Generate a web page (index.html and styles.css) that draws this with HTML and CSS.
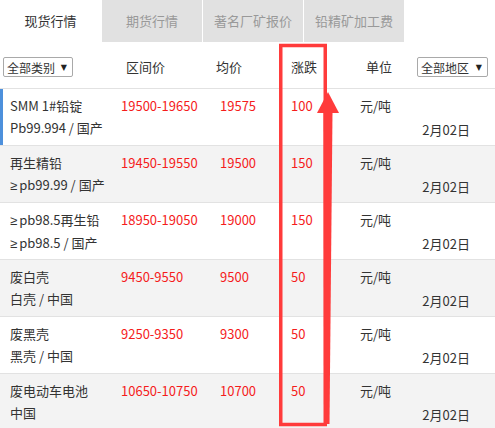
FILE: index.html
```html
<!DOCTYPE html>
<html>
<head>
    <title>铅价行情</title>
    <meta charset="UTF-8">
    <link rel="stylesheet" href="styles.css">
</head>
<body>
<div class="panel">
    <ul class="tabs">
        <li class="tab active">现货行情</li>
        <li class="tab">期货行情</li>
        <li class="tab">著名厂矿报价</li>
        <li class="tab">铅精矿加工费</li>
    </ul>

    <div class="table">
        <div class="row head">
            <div class="cell c-name"><span class="pick">全部类别<i class="tri">▼</i></span></div>
            <div class="cell c-range">区间价</div>
            <div class="cell c-avg">均价</div>
            <div class="cell c-chg">涨跌</div>
            <div class="cell c-unit">单位</div>
            <div class="cell c-date"><span class="pick">全部地区<i class="tri">▼</i></span></div>
        </div>

        <div class="row item selected">
            <div class="cell c-name">SMM 1#铅锭<br>Pb99.994 / 国产</div>
            <div class="cell c-range red">19500-19650</div>
            <div class="cell c-avg red">19575</div>
            <div class="cell c-chg red">100</div>
            <div class="cell c-unit">元/吨</div>
            <div class="cell c-date">2月02日</div>
        </div>

        <div class="row item odd">
            <div class="cell c-name">再生精铅<br><span class="ge">≥</span>pb99.99 / 国产</div>
            <div class="cell c-range red">19450-19550</div>
            <div class="cell c-avg red">19500</div>
            <div class="cell c-chg red">150</div>
            <div class="cell c-unit">元/吨</div>
            <div class="cell c-date">2月02日</div>
        </div>

        <div class="row item">
            <div class="cell c-name"><span class="ge">≥</span>pb98.5再生铅<br><span class="ge">≥</span>pb98.5 / 国产</div>
            <div class="cell c-range red">18950-19050</div>
            <div class="cell c-avg red">19000</div>
            <div class="cell c-chg red">150</div>
            <div class="cell c-unit">元/吨</div>
            <div class="cell c-date">2月02日</div>
        </div>

        <div class="row item odd">
            <div class="cell c-name">废白壳<br>白壳 / 中国</div>
            <div class="cell c-range red">9450-9550</div>
            <div class="cell c-avg red">9500</div>
            <div class="cell c-chg red">50</div>
            <div class="cell c-unit">元/吨</div>
            <div class="cell c-date">2月02日</div>
        </div>

        <div class="row item">
            <div class="cell c-name">废黑壳<br>黑壳 / 中国</div>
            <div class="cell c-range red">9250-9350</div>
            <div class="cell c-avg red">9300</div>
            <div class="cell c-chg red">50</div>
            <div class="cell c-unit">元/吨</div>
            <div class="cell c-date">2月02日</div>
        </div>

        <div class="row item odd">
            <div class="cell c-name">废电动车电池<br>中国</div>
            <div class="cell c-range red">10650-10750</div>
            <div class="cell c-avg red">10700</div>
            <div class="cell c-chg red">50</div>
            <div class="cell c-unit">元/吨</div>
            <div class="cell c-date">2月02日</div>
        </div>
    </div>

    <!-- annotation drawn over the 涨跌 column -->
    <svg class="mark" width="495" height="428" viewBox="0 0 495 428">
        <rect x="280.75" y="45.5" width="44.5" height="379" fill="none" stroke="#ff3b3b" stroke-width="3.5"/>
        <polygon points="328,92 339,113 317,113" fill="#ff3b3b"/>
        <polygon points="323.5,112 332.5,112 329.5,424 324,424" fill="#ff3b3b"/>
    </svg>
</div>
</body>
</html>
```

FILE: styles.css
```css
body {
  margin: 0;
  background: #fff;
  font-family: "Noto Sans CJK SC", "Noto Sans", sans-serif;
  font-size: 13px;
  color: #333;
}

.panel {
  position: relative;
  width: 495px;
  height: 428px;
  overflow: hidden;
}

/* Tabs */
.tabs {
  display: flex;
  gap: 1px;
  margin: 0;
  padding: 0;
  list-style: none;
}

.tab {
  width: 100px;
  height: 42px;
  line-height: 42px;
  text-align: center;
  background: #e1e1e1;
  color: #999;
}

.tab.active {
  width: 101px;
  background: #fff;
  color: #333;
}

/* Table rows */
.row {
  display: grid;
  grid-template-columns: 115px 97px 73px 67px 63px 1fr;
  border-bottom: 1px solid #e2e2e2;
}

.head {
  height: 46px;
  align-items: center;
}

.head .cell {
  padding-top: 2px;
}

.head .c-name { padding-left: 3px; padding-top: 4px; }
.head .c-range { padding-left: 11px; }
.head .c-avg { padding-left: 4px; }
.head .c-chg { padding-left: 6px; }
.head .c-unit { padding-left: 14px; }
.head .c-date { padding-left: 2px; padding-top: 4px; }

.pick {
  display: flex;
  align-items: center;
  justify-content: space-between;
  box-sizing: border-box;
  height: 20px;
  padding: 0 5px 0 3px;
  border: 1px solid #a9a9a9;
  border-radius: 2px;
  background: #fff;
  font-size: 12px;
  white-space: nowrap;
}

.head .c-name .pick { width: 70px; }
.head .c-date .pick { width: 71px; }

.tri {
  font-style: normal;
  font-family: "DejaVu Sans", sans-serif;
  font-size: 8px;
  color: #222;
}

.ge {
  font-family: "Liberation Sans", sans-serif;
  margin-right: 2px;
}

.item {
  height: 56px;
  line-height: 22px;
}

.item .cell {
  padding-top: 6px;
}

.item.odd {
  background: #f3f3f3;
}

.item.selected {
  box-shadow: inset 3px 0 0 #4d90dc;
}

.item .c-name { padding-left: 10px; }
.item .c-range { padding-left: 6px; }
.item .c-avg { padding-left: 8px; }
.item .c-chg { padding-left: 6px; }
.item .c-unit { padding-left: 8px; }

.item .c-date {
  padding-top: 0;
  padding-right: 25px;
  display: flex;
  align-items: flex-end;
  justify-content: flex-end;
  padding-bottom: 4px;
}

.red {
  color: #f51c1c;
}

.mark {
  position: absolute;
  top: 0;
  left: 0;
  pointer-events: none;
}
```
